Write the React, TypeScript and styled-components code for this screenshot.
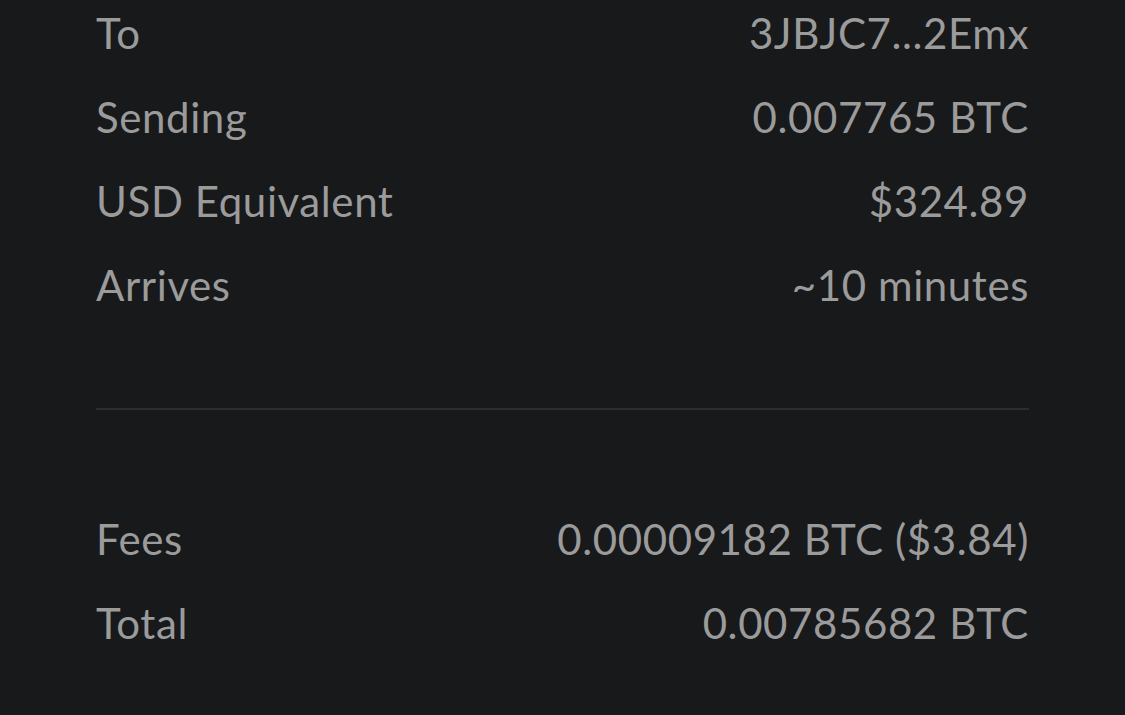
import React from "react";
import styled, { createGlobalStyle } from "styled-components";

const Global = createGlobalStyle`
  html, body { margin: 0; padding: 0; background: #18191b; }
  body { font-family: Lato, "Noto Sans", sans-serif; -webkit-font-smoothing: antialiased; }
`;

const Page = styled.div`
  width: 1125px;
  height: 715px;
  overflow: hidden;
  background: #18191b;
  padding: 0 96px;
  box-sizing: border-box;
`;

const Section = styled.div<{ $offset: number }>`
  display: flex;
  flex-direction: column;
  margin-top: ${(p) => p.$offset}px;
`;

const Row = styled.div`
  display: flex;
  justify-content: space-between;
  align-items: center;
  height: 84px;
  font-size: 42px;
  color: #9b9b9b;
  letter-spacing: 0.6px;
`;

const Label = styled.span``;
const Value = styled.span`
  text-align: right;
`;

const Divider = styled.hr`
  border: none;
  height: 2px;
  background: #2c2d2f;
  margin: 81px 0 0;
`;

const top = [
  ["To", "3JBJC7...2Emx"],
  ["Sending", "0.007765 BTC"],
  ["USD Equivalent", "$324.89"],
  ["Arrives", "~10 minutes"],
];
const bottom = [
  ["Fees", "0.00009182 BTC ($3.84)"],
  ["Total", "0.00785682 BTC"],
];

export default function App() {
  return (
    <Page>
      <Global />
      <Section $offset={-9}>
        {top.map(([l, v]) => (
          <Row key={l}>
            <Label>{l}</Label>
            <Value>{v}</Value>
          </Row>
        ))}
      </Section>
      <Divider />
      <Section $offset={87}>
        {bottom.map(([l, v]) => (
          <Row key={l}>
            <Label>{l}</Label>
            <Value>{v}</Value>
          </Row>
        ))}
      </Section>
    </Page>
  );
}
